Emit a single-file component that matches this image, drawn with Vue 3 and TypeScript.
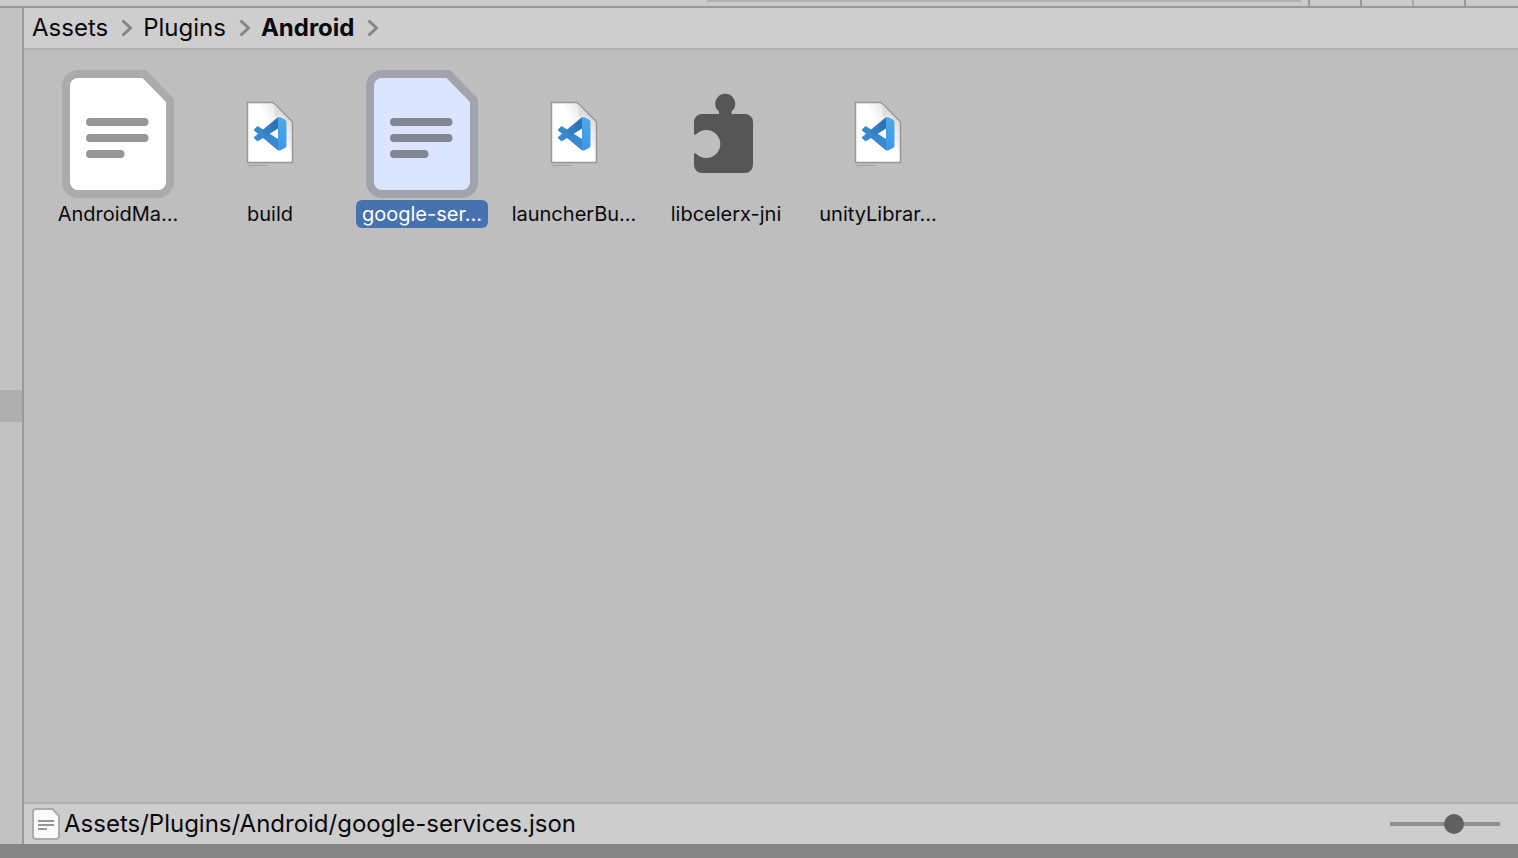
<script setup lang="ts">
import { ref } from 'vue'

type Kind = 'text' | 'code' | 'plugin'
interface Asset {
  label: string
  kind: Kind
}

const parents: string[] = ['Assets', 'Plugins']
const current = 'Android'
const assets: Asset[] = [
  { label: 'AndroidMa...', kind: 'text' },
  { label: 'build', kind: 'code' },
  { label: 'google-ser...', kind: 'text' },
  { label: 'launcherBu...', kind: 'code' },
  { label: 'libcelerx-jni', kind: 'plugin' },
  { label: 'unityLibrar...', kind: 'code' },
]
const selected = ref(2)
const zoom = ref(60)
</script>

<template>
  <div class="window">
    <div class="toolbar">
      <div class="search"></div>
      <button class="tool" type="button" aria-label="Filter by type"></button>
      <button class="tool" type="button" aria-label="Filter by label"></button>
      <button class="tool light" type="button" aria-label="Save search"></button>
      <button class="tool" type="button" aria-label="Hidden packages"></button>
    </div>
    <div class="body">
      <aside class="tree"><div class="tree-row"></div></aside>
      <main class="panel">
        <nav class="crumbs" aria-label="Folder path">
          <template v-for="name in parents" :key="name">
            <a href="#" class="crumb">{{ name }}</a>
            <svg class="chevron" viewBox="0 0 12 18"><path d="M1.5 1.5 9.5 9l-8 7.5" /></svg>
          </template>
          <a href="#" class="crumb current" aria-current="page">{{ current }}</a>
          <svg class="chevron" viewBox="0 0 12 18"><path d="M1.5 1.5 9.5 9l-8 7.5" /></svg>
        </nav>
        <section class="grid">
          <button
            v-for="(asset, i) in assets"
            :key="asset.label"
            type="button"
            class="tile"
            :class="{ selected: i === selected }"
            :aria-pressed="i === selected"
            @click="selected = i"
          >
            <svg v-if="asset.kind === 'text'" class="icon doc" viewBox="0 0 128 128">
              <path class="edge" d="M24 0H92L120 29V112a16 16 0 0 1-16 16H24a16 16 0 0 1-16-16V16A16 16 0 0 1 24 0Z" />
              <path class="sheet" d="M24 8H88.500L112 32V112a8 8 0 0 1-8 8H24a8 8 0 0 1-8-8V16a8 8 0 0 1 8-8Z" />
              <path class="lines" d="M36 52H90.500M36 68H90.500M36 84H66.500" />
            </svg>
            <svg v-else-if="asset.kind === 'code'" class="icon" viewBox="0 0 128 128">
              <defs>
                <linearGradient :id="'fold' + i" x1="0.35" y1="0.35" x2="0.8" y2="0">
                  <stop offset="0.2" stop-color="#fff" />
                  <stop offset="1" stop-color="#d8d8d8" />
                </linearGradient>
                <linearGradient :id="'blade' + i" x1="0" y1="0" x2="0" y2="1">
                  <stop offset="0" stop-color="#4dabe8" />
                  <stop offset="1" stop-color="#3f94e8" />
                </linearGradient>
                <linearGradient :id="'ribbon' + i" x1="0" y1="0" x2="1" y2="0">
                  <stop offset="0" stop-color="#3d8fd6" />
                  <stop offset="1" stop-color="#2b70b3" />
                </linearGradient>
              </defs>
              <path d="M41.500 32.500H67L86.500 52V92.500H41.500Z" :fill="'url(#fold' + i + ')'" stroke="#969696" stroke-width="1.500" stroke-linejoin="round" />
              <path d="M68 34 69 46.500 75 46 85 52Z" fill="#dedede" />
              <path d="M42 95.500H62" stroke="#a3a3a3" stroke-width="1" />
              <path d="M51.500 57 48.500 60 72 79.500V70Z" fill="#3688cf" stroke="#3688cf" stroke-width="1.500" stroke-linejoin="round" />
              <path d="M51.500 70.500 48.500 67.500 72 48V57.500Z" :fill="'url(#ribbon' + i + ')'" :stroke="'url(#ribbon' + i + ')'" stroke-width="1.500" stroke-linejoin="round" />
              <path d="M71 47.500 74 47 79 49.500Q80.500 50.500 80.500 52V75.500Q80.500 77 79 78L74 80.500 71 80Q72 79 72 77V50Z" :fill="'url(#blade' + i + ')'" />
            </svg>
            <svg v-else class="icon" viewBox="0 0 128 128">
              <path
                fill="#565656"
                d="M40 44H57V41.500A10 10 0 1 1 69.500 41.500V44H83a8 8 0 0 1 8 8V95a8 8 0 0 1-8 8H40a8 8 0 0 1-8-8V83.500H34A14 14 0 1 0 34 64.500H32V52a8 8 0 0 1 8-8Z"
              />
            </svg>
            <span class="label">{{ asset.label }}</span>
          </button>
        </section>
        <footer class="status">
          <svg class="mini" viewBox="0 0 28 32">
            <path d="M4 1H20.500L27 8V28a3 3 0 0 1-3 3H4a3 3 0 0 1-3-3V4a3 3 0 0 1 3-3Z" fill="#fafafa" stroke="#acacac" stroke-width="2" />
            <path d="M6 13H22M6 17H22M6 21H15" stroke="#969696" stroke-width="2" />
          </svg>
          <span class="path">Assets/Plugins/Android/google-services.json</span>
          <input v-model.number="zoom" class="slider" type="range" min="0" max="100" aria-label="Icon size" />
        </footer>
      </main>
    </div>
    <div class="bottom"></div>
  </div>
</template>

<style>
body {
  margin: 0;
}
</style>

<style scoped>
.window {
  display: flex;
  flex-direction: column;
  min-height: 100vh;
  background: #bebebe;
  color: #090909;
  font-family: Inter, "Liberation Sans", sans-serif;
}
.toolbar {
  display: flex;
  justify-content: flex-end;
  height: 6px;
  background: #cbcbcb;
  border-bottom: 2px solid #999;
}
.search {
  width: 594px;
  height: 2px;
  margin-right: 7px;
  background: #b0b0b0;
  border-radius: 0 0 4px 4px;
}
.tool {
  box-sizing: border-box;
  width: 52px;
  height: 6px;
  padding: 0;
  border: 0;
  border-left: 2px solid #999;
  background: none;
}
.tool.light {
  border-left-color: #a9a9a9;
}
.tool:last-child {
  width: 54px;
}
.body {
  display: flex;
  flex: 1;
}
.tree {
  width: 22px;
  border-right: 2px solid #999;
  background: #c2c2c2;
}
.tree-row {
  height: 32px;
  margin-top: 382px;
  background: #aeaeae;
}
.panel {
  display: flex;
  flex: 1;
  flex-direction: column;
  min-width: 0;
}
.crumbs {
  display: flex;
  align-items: center;
  height: 40px;
  padding-left: 8px;
  background: #cecece;
  border-bottom: 2px solid #b0b0b0;
}
.crumb {
  color: inherit;
  font-size: 24px;
  line-height: 32px;
  text-decoration: none;
}
.current {
  font-weight: 700;
}
.chevron {
  width: 12px;
  height: 18px;
  margin: 0 10px 0 13px;
  fill: none;
  stroke: #858585;
  stroke-width: 3;
}
.grid {
  display: flex;
  flex: 1;
  flex-wrap: wrap;
  align-content: flex-start;
  gap: 20px;
  padding: 20px 28px;
}
.tile {
  display: flex;
  flex-direction: column;
  align-items: center;
  gap: 2px;
  width: 132px;
  padding: 0;
  border: 0;
  background: none;
  color: inherit;
  font: inherit;
}
.icon {
  width: 128px;
  height: 128px;
}
.edge {
  fill: #ababab;
}
.sheet {
  fill: #fff;
}
.lines {
  fill: none;
  stroke: #969696;
  stroke-width: 8;
  stroke-linecap: round;
}
.selected .edge {
  fill: #a1a4ac;
}
.selected .sheet {
  fill: #dbe5ff;
}
.selected .lines {
  stroke: #818793;
}
.label {
  width: 100%;
  border-radius: 6px;
  font-size: 20px;
  line-height: 28px;
  white-space: nowrap;
}
.selected .label {
  background: #4772b0;
  color: #fff;
}
.status {
  display: flex;
  align-items: center;
  height: 40px;
  padding: 0 18px 0 8px;
  background: #cdcdcd;
  border-top: 2px solid #b0b0b0;
}
.mini {
  width: 28px;
  height: 32px;
  margin-right: 4px;
}
.path {
  flex: 1;
  font-size: 24px;
  line-height: 32px;
}
.slider {
  width: 110px;
  height: 20px;
  margin: 0;
  appearance: none;
  background: none;
}
.slider::-webkit-slider-runnable-track {
  height: 4px;
  background: #8f8f8f;
}
.slider::-webkit-slider-thumb {
  width: 20px;
  height: 20px;
  margin-top: -8px;
  appearance: none;
  border-radius: 50%;
  background: #616161;
}
.bottom {
  height: 14px;
  background: #858585;
}
</style>
